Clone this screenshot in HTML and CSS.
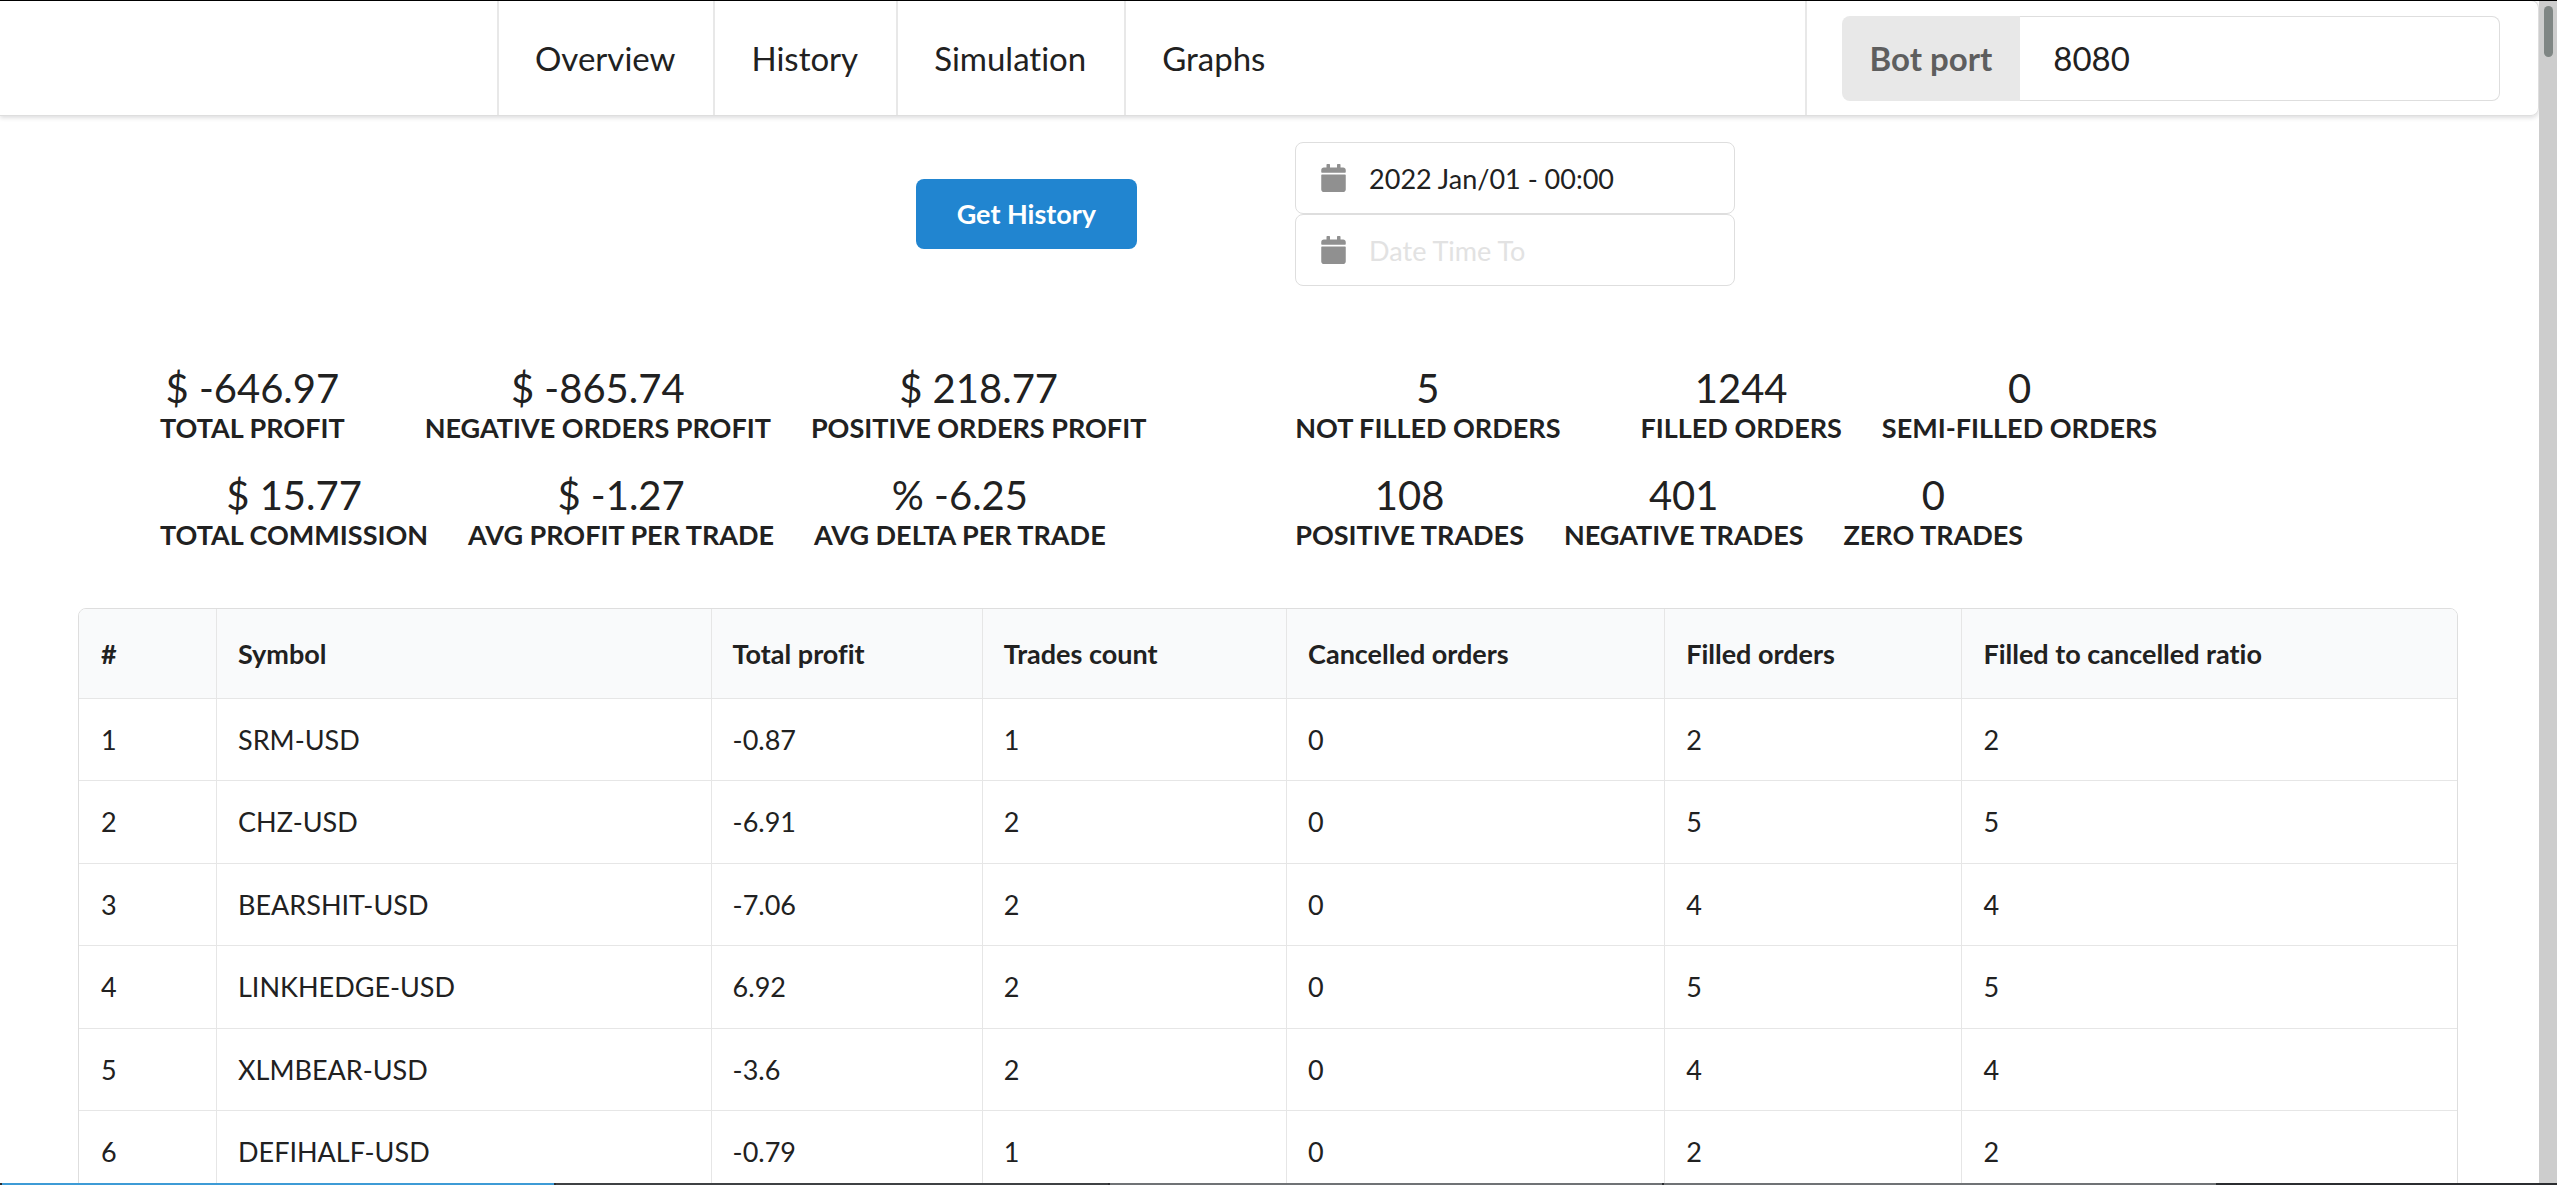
FILE: index.html
```html
<!DOCTYPE html>
<html lang="en">
<head>
<meta charset="utf-8">
<title>History</title>
<link rel="stylesheet" href="styles.css">
</head>
<body>
<div class="page">
  <header class="menu">
    <nav class="menu-links">
      <a class="menu-link" href="#overview">Overview</a>
      <a class="menu-link" href="#history">History</a>
      <a class="menu-link" href="#simulation">Simulation</a>
      <a class="menu-link" href="#graphs">Graphs</a>
    </nav>
    <div class="menu-port">
      <label class="port-label" for="port">Bot port</label>
      <input class="port-input" id="port" type="text" value="8080">
    </div>
  </header>

  <main class="content">
    <form class="filters">
      <div class="filters-action"><button class="button" type="button">Get History</button></div>
      <div class="filters-dates">
        <div class="date-field">
          <svg class="date-icon" viewBox="0 0 448 512" aria-hidden="true"><path d="M12 192h424c7 0 12 5 12 12v260c0 27-21 48-48 48H48c-27 0-48-21-48-48V204c0-7 5-12 12-12zm436-44v-36c0-27-21-48-48-48h-48V12c0-7-5-12-12-12h-40c-7 0-12 5-12 12v52H160V12c0-7-5-12-12-12h-40c-7 0-12 5-12 12v52H48C21 64 0 85 0 112v36c0 7 5 12 12 12h424c7 0 12-5 12-12z"/></svg>
          <input class="date-input" type="text" aria-label="Date Time From" placeholder="Date Time From" value="2022 Jan/01 - 00:00">
        </div>
        <div class="date-field">
          <svg class="date-icon" viewBox="0 0 448 512" aria-hidden="true"><path d="M12 192h424c7 0 12 5 12 12v260c0 27-21 48-48 48H48c-27 0-48-21-48-48V204c0-7 5-12 12-12zm436-44v-36c0-27-21-48-48-48h-48V12c0-7-5-12-12-12h-40c-7 0-12 5-12 12v52H160V12c0-7-5-12-12-12h-40c-7 0-12 5-12 12v52H48C21 64 0 85 0 112v36c0 7 5 12 12 12h424c7 0 12-5 12-12z"/></svg>
          <input class="date-input" type="text" aria-label="Date Time To" placeholder="Date Time To">
        </div>
      </div>
    </form>

    <section class="stats">
      <div class="stats-column">
        <div class="stats-row stats-row-lead">
          <div class="stat"><div class="stat-value">$ -646.97</div><div class="stat-label">Total profit</div></div>
          <div class="stat"><div class="stat-value">$ -865.74</div><div class="stat-label">Negative orders profit</div></div>
          <div class="stat"><div class="stat-value">$ 218.77</div><div class="stat-label">Positive orders profit</div></div>
        </div>
        <div class="stats-row">
          <div class="stat"><div class="stat-value">$ 15.77</div><div class="stat-label">Total commission</div></div>
          <div class="stat"><div class="stat-value">$ -1.27</div><div class="stat-label">Avg profit per trade</div></div>
          <div class="stat"><div class="stat-value">% -6.25</div><div class="stat-label">Avg delta per trade</div></div>
        </div>
      </div>
      <div class="stats-column">
        <div class="stats-row stats-row-lead">
          <div class="stat"><div class="stat-value">5</div><div class="stat-label">Not filled orders</div></div>
          <div class="stat"><div class="stat-value">1244</div><div class="stat-label">Filled orders</div></div>
          <div class="stat"><div class="stat-value">0</div><div class="stat-label">Semi-filled orders</div></div>
        </div>
        <div class="stats-row">
          <div class="stat"><div class="stat-value">108</div><div class="stat-label">Positive trades</div></div>
          <div class="stat"><div class="stat-value">401</div><div class="stat-label">Negative trades</div></div>
          <div class="stat"><div class="stat-value">0</div><div class="stat-label">Zero trades</div></div>
        </div>
      </div>
    </section>

    <table class="table">
      <colgroup><col class="col-index"><col class="col-symbol"><col class="col-profit"><col class="col-trades"><col class="col-cancelled"><col class="col-filled"><col></colgroup>
      <thead>
        <tr><th>#</th><th>Symbol</th><th>Total profit</th><th>Trades count</th><th>Cancelled orders</th><th>Filled orders</th><th>Filled to cancelled ratio</th></tr>
      </thead>
      <tbody>
        <tr><td>1</td><td>SRM-USD</td><td>-0.87</td><td>1</td><td>0</td><td>2</td><td>2</td></tr>
        <tr><td>2</td><td>CHZ-USD</td><td>-6.91</td><td>2</td><td>0</td><td>5</td><td>5</td></tr>
        <tr><td>3</td><td>BEARSHIT-USD</td><td>-7.06</td><td>2</td><td>0</td><td>4</td><td>4</td></tr>
        <tr><td>4</td><td>LINKHEDGE-USD</td><td>6.92</td><td>2</td><td>0</td><td>5</td><td>5</td></tr>
        <tr><td>5</td><td>XLMBEAR-USD</td><td>-3.6</td><td>2</td><td>0</td><td>4</td><td>4</td></tr>
        <tr><td>6</td><td>DEFIHALF-USD</td><td>-0.79</td><td>1</td><td>0</td><td>2</td><td>2</td></tr>
      </tbody>
    </table>
  </main>
</div>
<div class="scrollbar"><div class="scrollbar-thumb"></div></div>
<div class="top-edge"></div>
<div class="taskbar"><span class="task task-active"></span><span class="task"></span><span class="task task-light"></span><span class="task task-light"></span></div>
</body>
</html>
```
FILE: styles.css
```css
* { box-sizing: border-box; }

html, body { height: 100%; }

body {
  margin: 0;
  overflow: hidden;
  background: #fff;
  color: #212121;
  font: 27px/38px Lato, "Liberation Sans", sans-serif;
  font-variant-ligatures: none;
}

input, button { font: inherit; color: inherit; }

.page { height: 100%; margin-right: 18px; overflow: hidden; }

.menu {
  display: flex;
  justify-content: space-between;
  height: 116px;
  border: 1px solid #dedede;
  border-left: 0;
  border-radius: 0 8px 8px 0;
  box-shadow: 0 2px 4px rgba(34, 36, 38, .15);
  font-size: 33px;
}

.menu-links { display: flex; margin-left: 497px; }

.menu-link {
  display: flex;
  align-items: center;
  padding: 0 38px 0 36px;
  border-left: 2px solid #e8e8e8;
  color: inherit;
  text-decoration: none;
}

.menu-port {
  display: flex;
  align-items: center;
  width: 28.9%;
  padding: 0 38px 0 35px;
  border-left: 2px solid #e8e8e8;
}

.port-label {
  display: flex;
  align-items: center;
  height: 85px;
  padding: 0 28px;
  border-radius: 8px 0 0 8px;
  background: #e8e8e8;
  color: #5e5e5e;
  font-weight: 700;
  white-space: nowrap;
}

.port-input {
  flex: 1;
  min-width: 0;
  height: 85px;
  padding: 0 33px;
  border: 1px solid #dedede;
  border-left: 0;
  border-radius: 0 8px 8px 0;
  outline: 0;
}

.content { padding: 26px 81px 0 78px; }

.filters {
  display: grid;
  grid-template-columns: 44.5% 1fr;
  align-items: center;
  column-gap: 158px;
}

.filters-action { text-align: right; }

.button {
  height: 70px;
  padding: 0 41px;
  border: 0;
  border-radius: 8px;
  background: #2185d0;
  color: #fff;
  font-weight: 700;
}

.date-field { position: relative; width: 440px; }

.date-icon {
  position: absolute;
  top: 22px;
  left: 26px;
  width: 25px;
  height: 28px;
  fill: #909090;
}

.date-input {
  display: block;
  width: 100%;
  height: 72px;
  padding: 0 24px 0 73px;
  border: 1px solid #dedede;
  border-radius: 8px;
  outline: 0;
}

.date-input::placeholder { color: #e2e2e2; opacity: 1; }

.stats {
  display: grid;
  grid-template-columns: 49.4% 1fr;
  margin: 81px 0 27px;
  padding-left: 82px;
}

.stats-row { display: flex; gap: 40px; margin-bottom: 27px; }

.stats-row-lead > .stat:first-child { margin-right: 40px; }

.stat { text-align: center; white-space: nowrap; }

.stat-value { font-size: 40px; line-height: 42px; }

.stat-label { font-weight: 700; text-transform: uppercase; }

.table {
  width: 100%;
  table-layout: fixed;
  border: 1px solid #dedede;
  border-radius: 8px;
  border-spacing: 0;
  overflow: hidden;
}

.col-index { width: 137px; }
.col-symbol { width: 20.8%; }
.col-profit { width: 11.4%; }
.col-trades { width: 12.8%; }
.col-cancelled { width: 15.9%; }
.col-filled { width: 12.5%; }

.table th, .table td {
  padding: 0 22px 0 21px;
  border-left: 1px solid #e6e6e6;
  text-align: left;
}

.table th:first-child, .table td:first-child { padding-left: 22px; border-left: 0; }

.table th { height: 89px; background: #f9fafb; font-weight: 700; }

.table td { height: 82px; border-top: 1px solid #e6e6e6; }

.table tr:nth-child(even) td { height: 83px; }

.scrollbar {
  position: fixed;
  top: 0;
  right: 0;
  bottom: 0;
  width: 18px;
  padding: 6px 4px 0 5px;
  background: #cdcdcd;
}

.scrollbar-thumb { height: 51px; border-radius: 5px; background: #7f8684; }

.top-edge { position: fixed; top: 0; left: 0; right: 0; height: 1px; background: #000; }

.taskbar {
  position: fixed;
  left: 0;
  right: 0;
  bottom: 0;
  display: flex;
  gap: 2px;
  height: 2px;
  padding-left: 2px;
  background: #2b2d30;
}

.task { width: 21.6%; background: #3f4144; }
.task-active { background: #3d9bd6; }
.task-light { background: #707376; }
```
